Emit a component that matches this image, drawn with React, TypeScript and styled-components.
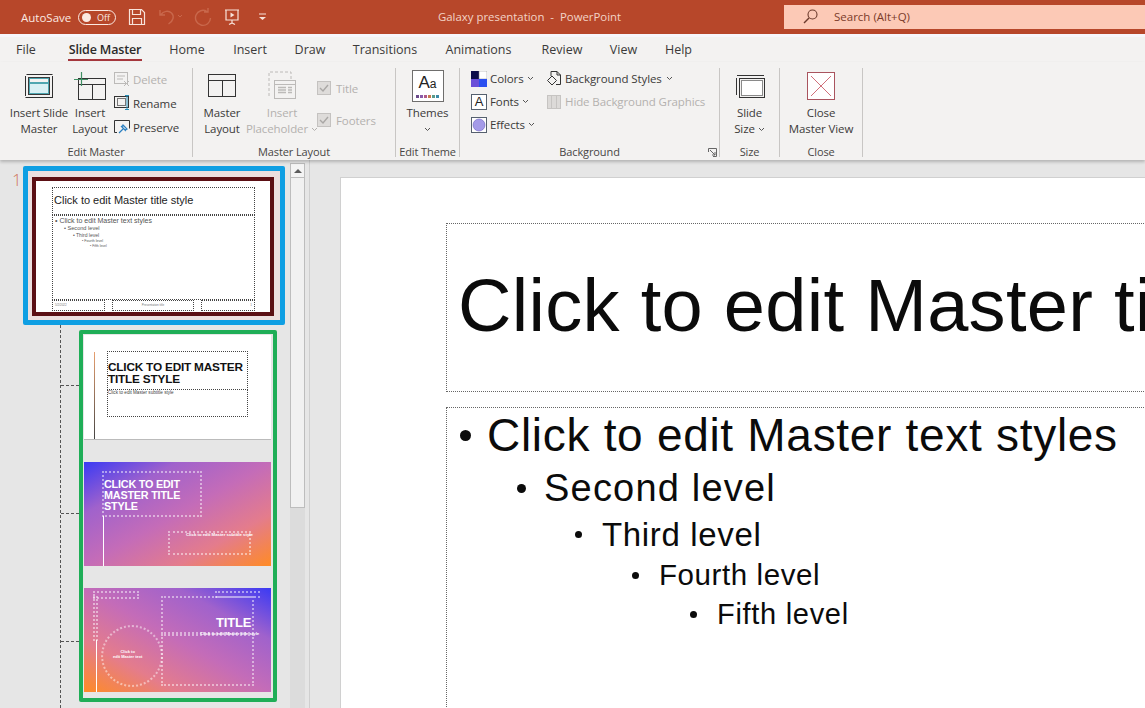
import React from 'react';
import styled, { createGlobalStyle } from 'styled-components';

const UI_FONT = '"Open Sans", "Noto Sans", sans-serif';
const SLIDE_FONT = '"Liberation Sans", Arial, sans-serif';

const GlobalStyle = createGlobalStyle`
  html, body {
    margin: 0;
    padding: 0;
    height: 100%;
    overflow: hidden;
    background: #e6e6e6;
  }
  #root {
    height: 100%;
  }
`;

const Window = styled.div`
  width: 1145px;
  height: 708px;
  display: flex;
  flex-direction: column;
  overflow: hidden;
  font-family: ${UI_FONT};
  color: #3b3a39;
`;

/* title bar */
const TitleBar = styled.header`
  flex: 0 0 34px;
  display: grid;
  grid-template-columns: 438px 346px 1fr;
  align-items: center;
  background: #b7472a;
  color: #f8e3da;
`;

const QuickAccess = styled.div`
  display: flex;
  align-items: center;
  padding-left: 21px;
  font-size: 11.5px;
`;

const AutoSave = styled.span`
  width: 57px;
  color: #fbe9e2;
`;

const Toggle = styled.span`
  width: 38px;
  height: 15px;
  box-sizing: border-box;
  border: 1px solid #fbe9e2;
  border-radius: 8px;
  display: flex;
  align-items: center;
  gap: 6px;
  padding-left: 3px;
  font-size: 9px;
  color: #fbe9e2;
  &::before {
    content: '';
    width: 9px;
    height: 9px;
    border-radius: 50%;
    background: #fbe9e2;
  }
`;

const QuickIcon = styled.span<{ $left: number }>`
  display: flex;
  margin-left: ${(p) => p.$left}px;
`;

const WindowTitle = styled.div`
  font-size: 11.4px;
  color: #f3d3c6;
  white-space: pre;
  padding-bottom: 1px;
`;

const SearchBox = styled.div`
  height: 24px;
  box-sizing: border-box;
  background: #fcc9b6;
  display: flex;
  align-items: center;
  gap: 16px;
  padding: 0 0 2px 19px;
  font-size: 11.5px;
  color: #7b3b2a;
`;

/* tabs */
const TabRow = styled.nav`
  flex: 0 0 28px;
  box-sizing: border-box;
  display: flex;
  background: #f3f2f1;
  border-top: 3px solid #f7f6fb;
  font-size: 12.5px;
`;

const Tab = styled.div<{ $width: number }>`
  width: ${(p) => p.$width}px;
  display: flex;
  justify-content: center;
  padding-top: 4px;
  box-sizing: border-box;
`;

const TabText = styled.span<{ $active?: boolean }>`
  height: 20px;
  line-height: 17px;
  box-sizing: border-box;
  padding: 0 1px;
  border-bottom: ${(p) => (p.$active ? '2px solid #a5373d' : 'none')};
  color: ${(p) => (p.$active ? '#2b2a29' : '#3b3a39')};
  font-weight: ${(p) => (p.$active ? 600 : 400)};
  letter-spacing: ${(p) => (p.$active ? '-0.15px' : '0')};
`;

/* ribbon */
const Ribbon = styled.section`
  flex: 0 0 98px;
  display: flex;
  background: #f3f2f1;
  font-size: 11.5px;
  letter-spacing: -0.1px;
  box-shadow: 0 2px 3px rgba(0, 0, 0, 0.22);
  position: relative;
  z-index: 2;
`;

const Group = styled.div<{ $width: number }>`
  width: ${(p) => p.$width}px;
  display: flex;
  flex-direction: column;
  position: relative;
`;

const GroupBody = styled.div<{ $pad?: number }>`
  height: 78px;
  padding: 4px 0 0 ${(p) => p.$pad ?? 0}px;
  display: flex;
  align-items: flex-start;
`;

const GroupLabel = styled.div`
  height: 16px;
  line-height: 16px;
  text-align: center;
  font-size: 11px;
  color: #484644;
`;

const Launcher = styled.span`
  position: absolute;
  right: 2px;
  bottom: 3px;
  display: flex;
`;

const Divider = styled.div`
  width: 1px;
  margin: 6px 0 3px;
  background: #c8c6c4;
`;

const BigButton = styled.div<{ $width: number; $disabled?: boolean }>`
  width: ${(p) => p.$width}px;
  flex: none;
  display: flex;
  flex-direction: column;
  align-items: center;
  color: ${(p) => (p.$disabled ? '#b3b1af' : 'inherit')};
`;

const BigIcon = styled.div`
  height: 39px;
  display: flex;
  align-items: center;
  justify-content: center;
`;

const BigLabel = styled.div`
  display: flex;
  align-items: center;
  justify-content: center;
  gap: 3px;
  line-height: 16px;
  min-height: 16px;
  white-space: nowrap;
`;

const SmallColumn = styled.div<{ $left?: number; $top?: number; $row: number; $width?: number }>`
  margin: ${(p) => p.$top ?? 0}px 0 0 ${(p) => p.$left ?? 0}px;
  width: ${(p) => (p.$width ? `${p.$width}px` : 'auto')};
  display: grid;
  grid-auto-rows: ${(p) => p.$row}px;
  flex: none;
`;

const SmallItem = styled.div<{ $gap?: number; $disabled?: boolean }>`
  display: flex;
  align-items: center;
  gap: ${(p) => p.$gap ?? 3}px;
  white-space: nowrap;
  color: ${(p) => (p.$disabled ? '#b3b1af' : 'inherit')};
`;

const ThemeTile = styled.div`
  width: 32px;
  height: 32px;
  box-sizing: border-box;
  border: 1px solid #6f6e6d;
  background: #fff;
  display: flex;
  flex-direction: column;
  align-items: center;
  font-family: ${SLIDE_FONT};
  color: #222;
`;

const ThemeLetters = styled.span`
  font-size: 17px;
  line-height: 22px;
  margin-top: 1px;
  letter-spacing: 0;
  & small {
    font-size: 12px;
  }
`;

const ThemeDots = styled.div`
  display: flex;
  gap: 1px;
`;

const ThemeDot = styled.i<{ $color: string }>`
  width: 3px;
  height: 3px;
  background: ${(p) => p.$color};
`;

const FontTile = styled.span`
  width: 16px;
  height: 16px;
  box-sizing: border-box;
  border: 1px solid #55606e;
  background: #fff;
  display: flex;
  align-items: center;
  justify-content: center;
  font-family: ${SLIDE_FONT};
  font-size: 13px;
  color: #222;
`;

/* workspace */
const Workspace = styled.main`
  flex: 1;
  min-height: 0;
  display: flex;
  background: #e6e6e6;
`;

const Sidebar = styled.aside`
  flex: 0 0 310px;
  box-sizing: border-box;
  display: flex;
  border-right: 1px solid #cfcfcf;
`;

const ThumbList = styled.div`
  width: 290px;
  padding-top: 6px;
  box-sizing: border-box;
`;

const MasterRow = styled.div`
  display: flex;
`;

const SlideNumber = styled.div`
  width: 23px;
  padding: 4px 0 0 12px;
  box-sizing: border-box;
  font-size: 17px;
  line-height: 20px;
  font-weight: 300;
  color: #cf7660;
`;

const MasterFrame = styled.div`
  width: 262px;
  height: 159px;
  box-sizing: border-box;
  border: 5px solid #0f9fe3;
  border-radius: 2px;
  background: #ecdfdf;
  padding: 6px 0 0 4px;
`;

const MasterSlide = styled.div`
  width: 242px;
  height: 139px;
  box-sizing: border-box;
  border: 4px solid #5b0f14;
  background: #fff;
  position: relative;
  font-family: ${SLIDE_FONT};
`;

const Marquee = styled.div<{ $x: number; $y: number; $w: number; $h: number; $light?: boolean; $round?: boolean }>`
  position: absolute;
  left: ${(p) => p.$x}px;
  top: ${(p) => p.$y}px;
  width: ${(p) => p.$w}px;
  height: ${(p) => p.$h}px;
  box-sizing: border-box;
  border: ${(p) => (p.$light ? '2px dotted rgba(255, 255, 255, 0.48)' : '1px dotted #444')};
  border-radius: ${(p) => (p.$round ? '50%' : '0')};
`;

const ThumbTitle = styled.div`
  position: absolute;
  left: 1px;
  top: 6px;
  font-size: 11px;
  line-height: 13px;
  color: #222;
  white-space: nowrap;
`;

const ThumbLevel = styled.div<{ $indent: number; $size: number }>`
  padding-left: ${(p) => p.$indent}px;
  font-size: ${(p) => p.$size}px;
  line-height: ${(p) => p.$size + 1.4}px;
  color: #555;
  white-space: nowrap;
`;

const ThumbBody = styled.div`
  position: absolute;
  left: 2px;
  top: 1px;
`;

const FooterText = styled.div<{ $align: string }>`
  font-size: 3px;
  line-height: 9px;
  padding: 0 2px;
  text-align: ${(p) => p.$align};
  color: #777;
`;

const LayoutRow = styled.div`
  display: flex;
  margin-left: 60px;
`;

const TreeRail = styled.div`
  width: 19px;
  height: 383px;
  flex: none;
  box-sizing: border-box;
  border-left: 1px dashed #555;
  display: flex;
  flex-direction: column;
  padding-top: 60px;
  gap: 127px;
`;

const TreeBranch = styled.div`
  height: 0;
  border-top: 1px dashed #555;
`;

const LayoutFrame = styled.div`
  width: 198px;
  height: 372px;
  margin-top: 5px;
  box-sizing: border-box;
  border: 4px solid #1fae57;
  border-radius: 2px;
  padding: 1px 0 0 1px;
  display: flex;
  flex-direction: column;
  gap: 22px;
`;

const LayoutSlide = styled.div<{ $variant: 'plain' | 'diagonal' | 'reverse' }>`
  width: 187px;
  height: 104px;
  flex: none;
  position: relative;
  overflow: hidden;
  font-family: ${SLIDE_FONT};
  background: ${(p) =>
    p.$variant === 'plain'
      ? '#fff'
      : p.$variant === 'diagonal'
        ? 'linear-gradient(to bottom right, #3a3af4 0%, #a062cc 25%, #c46cb8 50%, #e47c8c 75%, #ff8b25 100%)'
        : 'linear-gradient(to top right, #ff8b25 0%, #e47c8c 25%, #c46cb8 50%, #a062cc 75%, #3a3af4 100%)'};
  border-bottom: ${(p) => (p.$variant === 'plain' ? '1px solid #bbb' : 'none')};
`;

const SlideRule = styled.div<{ $x: number; $y: number; $h: number; $fade?: boolean }>`
  position: absolute;
  left: ${(p) => p.$x}px;
  top: ${(p) => p.$y}px;
  width: 1px;
  height: ${(p) => p.$h}px;
  background: ${(p) => (p.$fade ? 'linear-gradient(#e8a070, #444)' : '#fff')};
`;

const CapsTitle = styled.div<{ $x: number; $y: number; $size: number; $line: number; $light?: boolean }>`
  position: absolute;
  left: ${(p) => p.$x}px;
  top: ${(p) => p.$y}px;
  font-size: ${(p) => p.$size}px;
  line-height: ${(p) => p.$line}px;
  font-weight: 700;
  letter-spacing: -0.2px;
  color: ${(p) => (p.$light ? '#fff' : '#111')};
  white-space: nowrap;
`;

const TinyText = styled.div<{ $x: number; $y: number; $light?: boolean; $size?: number }>`
  position: absolute;
  left: ${(p) => p.$x}px;
  top: ${(p) => p.$y}px;
  font-size: ${(p) => p.$size ?? 4.6}px;
  line-height: ${(p) => (p.$size ? p.$size + 0.6 : 6)}px;
  font-weight: ${(p) => (p.$light ? 700 : 400)};
  color: ${(p) => (p.$light ? '#fff' : '#444')};
  white-space: nowrap;
  text-align: center;
`;

const ScrollColumn = styled.div`
  width: 15px;
  padding-top: 3px;
  display: flex;
  flex-direction: column;
  background: transparent;
`;

const ScrollUp = styled.div`
  height: 15px;
  flex: none;
  box-sizing: border-box;
  border: 1px solid #bdbdbd;
  background: #f4f4f4;
  display: flex;
  align-items: center;
  justify-content: center;
  &::before {
    content: '';
    border-left: 4px solid transparent;
    border-right: 4px solid transparent;
    border-bottom: 4px solid #5c5c5c;
  }
`;

const ScrollThumb = styled.div`
  height: 330px;
  flex: none;
  box-sizing: border-box;
  border: 1px solid #bdbdbd;
  border-top: none;
  background: #f1f1f1;
`;

const ScrollTrack = styled.div`
  flex: 1;
  background: #dcdcdc;
`;

const Stage = styled.div`
  flex: 1;
  min-width: 0;
  overflow: hidden;
  padding: 17px 0 0 30px;
`;

const SlideSheet = styled.div`
  width: 1100px;
  height: 700px;
  box-sizing: border-box;
  background: #fff;
  border: 1px solid #d0d0d0;
  padding: 45px 0 0 105px;
  font-family: ${SLIDE_FONT};
  color: #0b0b0b;
`;

const TitleHolder = styled.div`
  width: 900px;
  height: 169px;
  box-sizing: border-box;
  border: 1px dotted #666;
  padding: 0 0 5px 11px;
  display: flex;
  align-items: center;
  font-size: 74px;
  letter-spacing: 0.3px;
  white-space: nowrap;
  overflow: hidden;
`;

const BodyHolder = styled.div`
  width: 900px;
  height: 500px;
  margin-top: 15px;
  box-sizing: border-box;
  border: 1px dotted #666;
  padding: 0 0 0 13px;
`;

const Level = styled.div<{ $indent: number; $size: number; $height: number; $bullet: number; $spacing: number }>`
  height: ${(p) => p.$height}px;
  line-height: ${(p) => p.$height}px;
  margin-left: ${(p) => p.$indent}px;
  font-size: ${(p) => p.$size}px;
  letter-spacing: ${(p) => p.$spacing}px;
  white-space: nowrap;
  display: flex;
  align-items: center;
  &::before {
    content: '';
    width: ${(p) => p.$bullet}px;
    height: ${(p) => p.$bullet}px;
    margin-right: ${(p) => 27 - p.$bullet}px;
    border-radius: 50%;
    background: #0b0b0b;
    flex: none;
  }
`;

const Chevron = ({ color = '#555' }: { color?: string }) => (
  <svg width="7" height="5" viewBox="0 0 7 5">
    <polyline points="1,1 3.5,3.5 6,1" fill="none" stroke={color} strokeWidth="1" />
  </svg>
);

const TitleIcon = ({ children, w = 18 }: { children: React.ReactNode; w?: number }) => (
  <svg width={w} height="20" viewBox={`0 0 ${w} 20`} fill="none" stroke="#f8e3da" strokeWidth="1.2">
    {children}
  </svg>
);

const Check = () => (
  <svg width="14" height="14" viewBox="0 0 14 14">
    <rect x="0.5" y="0.5" width="13" height="13" fill="#dedcda" stroke="#c4c2c0" />
    <polyline points="3,7 6,10 11,4" fill="none" stroke="#a9a7a5" strokeWidth="1.4" />
  </svg>
);

const App: React.FC = () => {
  const tabs: [string, number][] = [
    ['File', 52],
    ['Slide Master', 106],
    ['Home', 58],
    ['Insert', 68],
    ['Draw', 52],
    ['Transitions', 98],
    ['Animations', 89],
    ['Review', 78],
    ['View', 45],
    ['Help', 65],
  ];

  return (
    <Window>
      <GlobalStyle />
      <TitleBar>
        <QuickAccess>
          <AutoSave>AutoSave</AutoSave>
          <Toggle>Off</Toggle>
          <QuickIcon $left={12}>
            <TitleIcon>
              <path d="M1.5 2.5h12l3 3v12h-15z" />
              <path d="M4.5 2.5v5h8v-5M4.5 17.5v-6h9v6" />
            </TitleIcon>
          </QuickIcon>
          <QuickIcon $left={11}>
            <svg width="26" height="20" viewBox="0 0 26 20" fill="none" stroke="#c9684c" strokeWidth="1.4">
              <path d="M3 3v5h5M3.500 8c3-4 8-5 11-2 3 3 2 8-3 11" />
              <path d="M21 8l2 2 2-2" strokeWidth="1" />
            </svg>
          </QuickIcon>
          <QuickIcon $left={11}>
            <svg width="18" height="20" viewBox="0 0 18 20" fill="none" stroke="#c9684c" strokeWidth="1.4">
              <path d="M13 4.500A7.500 7.500 0 1 0 16.500 11M14 1v4h-4" />
            </svg>
          </QuickIcon>
          <QuickIcon $left={11}>
            <TitleIcon>
              <path d="M2 3h14M3 3v10h12V3M9 13v3M6 17.500l3-1.500 3 1.500" />
              <path d="M7.500 5.500l4 2.500-4 2.500z" fill="#f8e3da" stroke="none" />
            </TitleIcon>
          </QuickIcon>
          <QuickIcon $left={17}>
            <svg width="9" height="10" viewBox="0 0 9 10" fill="none" stroke="#f8e3da">
              <path d="M1 2h7" />
              <path d="M1 5l3.500 3L8 5z" fill="#f8e3da" stroke="none" />
            </svg>
          </QuickIcon>
        </QuickAccess>
        <WindowTitle>Galaxy presentation  -  PowerPoint</WindowTitle>
        <SearchBox>
          <svg width="15" height="15" viewBox="0 0 15 15" fill="none" stroke="#6b3a2c" strokeWidth="1.1">
            <circle cx="9.500" cy="5.500" r="4.500" />
            <path d="M6 9l-5 5" strokeWidth="1.500" />
          </svg>
          <span>Search (Alt+Q)</span>
        </SearchBox>
      </TitleBar>

      <TabRow>
        {tabs.map(([name, width]) => (
          <Tab key={name} $width={width}>
            <TabText $active={name === 'Slide Master'}>{name}</TabText>
          </Tab>
        ))}
      </TabRow>

      <Ribbon>
        <Group $width={192}>
          <GroupBody $pad={9}>
            <BigButton $width={60}>
              <BigIcon>
                <svg width="30" height="26" viewBox="0 0 30 26" fill="none" stroke="#2f2f2f">
                  <path d="M2.500 1.500h26M1.500 3v20M1.500 24.500h27.500M28.500 3v21" />
                  <rect x="4.500" y="4.500" width="21" height="17" stroke="#3a3a3a" />
                  <rect x="5.500" y="5.500" width="19" height="4" stroke="#4fa6b0" />
                  <rect x="5.500" y="10.500" width="19" height="10" fill="#d9f0f4" stroke="#4fa6b0" />
                </svg>
              </BigIcon>
              <BigLabel>Insert Slide</BigLabel>
              <BigLabel>Master</BigLabel>
            </BigButton>
            <BigButton $width={42}>
              <BigIcon>
                <svg width="32" height="30" viewBox="0 0 32 30" fill="none" stroke="#333">
                  <rect x="4.500" y="7.500" width="27" height="21" />
                  <path d="M5 13.500h26M18.500 14v14" />
                  <path d="M0 8.500h14M7.500 1v14" stroke="#3f8f63" strokeWidth="1.200" />
                </svg>
              </BigIcon>
              <BigLabel>Insert</BigLabel>
              <BigLabel>Layout</BigLabel>
            </BigButton>
            <SmallColumn $left={3} $top={1} $row={24}>
              <SmallItem $disabled>
                <svg width="16" height="16" viewBox="0 0 16 16" fill="none" stroke="#bcbab8">
                  <rect x="0.500" y="1.500" width="13" height="11" />
                  <path d="M3 5h8M3 8h6M10 10l5 5M15 10l-5 5" />
                </svg>
                Delete
              </SmallItem>
              <SmallItem>
                <svg width="16" height="18" viewBox="0 0 16 18" fill="none" stroke="#333">
                  <rect x="0.500" y="2.500" width="14" height="11" />
                  <rect x="3.500" y="4.500" width="8" height="7" stroke="#777" />
                  <path d="M11 1.500h4M13 1.500v14M11 15.500h4" stroke="#2a8fb8" />
                </svg>
                Rename
              </SmallItem>
              <SmallItem>
                <svg width="16" height="16" viewBox="0 0 16 16" fill="none" stroke="#333">
                  <path d="M3 13.500H0.500V1.500h15v8" />
                  <path d="M5 14l4-4M7 7l5 5M9 6l4 4-2 1-3-3z" stroke="#2a7fc0" strokeWidth="1.200" />
                </svg>
                Preserve
              </SmallItem>
            </SmallColumn>
          </GroupBody>
          <GroupLabel>Edit Master</GroupLabel>
        </Group>
        <Divider />

        <Group $width={202}>
          <GroupBody $pad={7}>
            <BigButton $width={44}>
              <BigIcon>
                <svg width="28" height="23" viewBox="0 0 28 23" fill="none" stroke="#333">
                  <rect x="0.500" y="0.500" width="27" height="22" />
                  <path d="M1 6.500h26M14.500 7v15" />
                </svg>
              </BigIcon>
              <BigLabel>Master</BigLabel>
              <BigLabel>Layout</BigLabel>
            </BigButton>
            <BigButton $width={76} $disabled>
              <BigIcon>
                <svg width="28" height="30" viewBox="0 0 28 30" fill="none" stroke="#bcbab8">
                  <path d="M1 25V1h22v8" strokeDasharray="3 2" />
                  <rect x="6.500" y="9.500" width="21" height="18" fill="#f3f2f1" />
                  <path d="M7 13.500h20" />
                  <path d="M10 16.500h8M10 19h8M10 21.500h8M20 16.500h4M20 19h4M20 21.500h4" strokeWidth="1.600" />
                </svg>
              </BigIcon>
              <BigLabel>Insert</BigLabel>
              <BigLabel>
                Placeholder
                <Chevron color="#b3b1af" />
              </BigLabel>
            </BigButton>
            <SmallColumn $left={-3} $top={6} $row={32}>
              <SmallItem $disabled $gap={5}>
                <Check />
                Title
              </SmallItem>
              <SmallItem $disabled $gap={5}>
                <Check />
                Footers
              </SmallItem>
            </SmallColumn>
          </GroupBody>
          <GroupLabel>Master Layout</GroupLabel>
        </Group>
        <Divider />

        <Group $width={63}>
          <GroupBody>
            <BigButton $width={63}>
              <BigIcon>
                <ThemeTile>
                  <ThemeLetters>
                    A<small>a</small>
                  </ThemeLetters>
                  <ThemeDots>
                    {['#6b4a8a', '#8a5aa8', '#b05a8a', '#c87a4a', '#5a9a8a', '#3a8aa8'].map((c) => (
                      <ThemeDot key={c} $color={c} />
                    ))}
                  </ThemeDots>
                </ThemeTile>
              </BigIcon>
              <BigLabel>Themes</BigLabel>
              <BigLabel>
                <Chevron />
              </BigLabel>
            </BigButton>
          </GroupBody>
          <GroupLabel>Edit Theme</GroupLabel>
        </Group>
        <Divider />

        <Group $width={259}>
          <GroupBody $pad={11}>
            <SmallColumn $top={1} $row={23} $width={76}>
              <SmallItem>
                <svg width="16" height="16" viewBox="0 0 16 16">
                  <rect width="8" height="8" fill="#0c0c4a" />
                  <rect x="8" width="8" height="8" fill="#fff" stroke="#888" strokeWidth="0.500" />
                  <rect y="8" width="8" height="8" fill="#6a4fd8" />
                  <rect x="8" y="8" width="8" height="8" fill="#2a4ff0" />
                </svg>
                Colors
                <Chevron />
              </SmallItem>
              <SmallItem>
                <FontTile>A</FontTile>
                Fonts
                <Chevron />
              </SmallItem>
              <SmallItem>
                <svg width="16" height="16" viewBox="0 0 16 16">
                  <rect x="0.500" y="0.500" width="15" height="15" fill="#fff" stroke="#55606e" />
                  <circle cx="8" cy="8" r="6" fill="#a49ae8" stroke="#6a60c0" strokeWidth="0.600" />
                </svg>
                Effects
                <Chevron />
              </SmallItem>
            </SmallColumn>
            <SmallColumn $top={1} $row={23}>
              <SmallItem $gap={4}>
                <svg width="14" height="16" viewBox="0 0 14 16" fill="none" stroke="#333">
                  <path d="M4 5V0.500h6l3.500 3.500v9.500H9" />
                  <path d="M10 0.500V4h3.500" />
                  <path d="M5 5l4.500 4.500L5 14 0.500 9.500z" />
                </svg>
                Background Styles
                <Chevron />
              </SmallItem>
              <SmallItem $disabled $gap={4}>
                <svg width="14" height="14" viewBox="0 0 14 14" fill="#dcdad8" stroke="#c6c4c2">
                  <rect x="0.500" y="0.500" width="13" height="13" />
                  <path d="M4.500 1v12M9.500 1v12" />
                </svg>
                Hide Background Graphics
              </SmallItem>
            </SmallColumn>
          </GroupBody>
          <GroupLabel>Background</GroupLabel>
          <Launcher>
            <svg width="9" height="9" viewBox="0 0 9 9" fill="none" stroke="#666">
              <path d="M0.500 4V0.500H8.500V8.500H5" />
              <path d="M2 2l5 5M4 7h3V4" />
            </svg>
          </Launcher>
        </Group>
        <Divider />

        <Group $width={59}>
          <GroupBody>
            <BigButton $width={59}>
              <BigIcon>
                <svg width="30" height="24" viewBox="0 0 30 24" fill="none" stroke="#333">
                  <path d="M2 1.500h27M1.500 4v17" />
                  <rect x="4.500" y="4.500" width="25" height="19" />
                  <rect x="6.500" y="6.500" width="21" height="15" fill="#fff" stroke="#8a8a8a" />
                </svg>
              </BigIcon>
              <BigLabel>Slide</BigLabel>
              <BigLabel>
                Size
                <Chevron />
              </BigLabel>
            </BigButton>
          </GroupBody>
          <GroupLabel>Size</GroupLabel>
        </Group>
        <Divider />

        <Group $width={82}>
          <GroupBody>
            <BigButton $width={82}>
              <BigIcon>
                <svg width="28" height="28" viewBox="0 0 28 28" fill="#fff" stroke="#a9545e">
                  <rect x="0.500" y="0.500" width="27" height="27" />
                  <path d="M4 4l20 20M24 4L4 24" stroke="#d0707a" />
                </svg>
              </BigIcon>
              <BigLabel>Close</BigLabel>
              <BigLabel>Master View</BigLabel>
            </BigButton>
          </GroupBody>
          <GroupLabel>Close</GroupLabel>
        </Group>
        <Divider />
      </Ribbon>

      <Workspace>
        <Sidebar>
          <ThumbList>
            <MasterRow>
              <SlideNumber>1</SlideNumber>
              <MasterFrame>
                <MasterSlide>
                  <Marquee $x={16} $y={6} $w={203} $h={28}>
                    <ThumbTitle>Click to edit Master title style</ThumbTitle>
                  </Marquee>
                  <Marquee $x={16} $y={34} $w={203} $h={85}>
                    <ThumbBody>
                      <ThumbLevel $indent={0} $size={7}>• Click to edit Master text styles</ThumbLevel>
                      <ThumbLevel $indent={9} $size={5.600}>• Second level</ThumbLevel>
                      <ThumbLevel $indent={18} $size={5}>• Third level</ThumbLevel>
                      <ThumbLevel $indent={27} $size={3.600}>• Fourth level</ThumbLevel>
                      <ThumbLevel $indent={35} $size={3.400}>• Fifth level</ThumbLevel>
                    </ThumbBody>
                  </Marquee>
                  <Marquee $x={16} $y={119} $w={53} $h={11}>
                    <FooterText $align="left">5/2/2022</FooterText>
                  </Marquee>
                  <Marquee $x={76} $y={119} $w={82} $h={11}>
                    <FooterText $align="center">Presentation title</FooterText>
                  </Marquee>
                  <Marquee $x={165} $y={119} $w={54} $h={11}>
                    <FooterText $align="right">1</FooterText>
                  </Marquee>
                </MasterSlide>
              </MasterFrame>
            </MasterRow>

            <LayoutRow>
              <TreeRail>
                <TreeBranch />
                <TreeBranch />
                <TreeBranch />
              </TreeRail>
              <LayoutFrame>
                <LayoutSlide $variant="plain">
                  <SlideRule $x={10} $y={17} $h={87} $fade />
                  <Marquee $x={23} $y={16} $w={141} $h={39} />
                  <Marquee $x={23} $y={54} $w={141} $h={28} />
                  <CapsTitle $x={24} $y={26} $size={11.800} $line={12}>
                    CLICK TO EDIT MASTER
                    <br />
                    TITLE STYLE
                  </CapsTitle>
                  <TinyText $x={24} $y={55}>Click to edit Master subtitle style</TinyText>
                </LayoutSlide>
                <LayoutSlide $variant="diagonal">
                  <Marquee $light $x={18} $y={9} $w={100} $h={46} />
                  <CapsTitle $light $x={20} $y={17} $size={10.800} $line={11}>
                    CLICK TO EDIT
                    <br />
                    MASTER TITLE
                    <br />
                    STYLE
                  </CapsTitle>
                  <SlideRule $x={19} $y={54} $h={50} />
                  <Marquee $light $x={84} $y={69} $w={83} $h={24} />
                  <TinyText $light $x={102} $y={71} $size={4.300}>Click to edit Master subtitle style</TinyText>
                </LayoutSlide>
                <LayoutSlide $variant="reverse">
                  <Marquee $light $x={9} $y={3} $w={46} $h={8} />
                  <Marquee $light $x={9} $y={8} $w={5} $h={45} />
                  <Marquee $light $x={131} $y={3} $w={45} $h={7} />
                  <Marquee $light $x={77} $y={8} $w={93} $h={38} />
                  <Marquee $light $x={77} $y={46} $w={93} $h={52} />
                  <Marquee $light $round $x={17} $y={37} $w={62} $h={62} />
                  <SlideRule $x={12} $y={52} $h={52} />
                  <CapsTitle $light $x={132} $y={28} $size={13} $line={14}>TITLE</CapsTitle>
                  <TinyText $light $x={116} $y={44} $size={4.300}>Click to edit Master title style</TinyText>
                  <TinyText $light $x={29} $y={62} $size={4}>
                    Click to
                    <br />
                    edit Master text
                  </TinyText>
                </LayoutSlide>
              </LayoutFrame>
            </LayoutRow>
          </ThumbList>
          <ScrollColumn>
            <ScrollUp />
            <ScrollThumb />
            <ScrollTrack />
          </ScrollColumn>
        </Sidebar>

        <Stage>
          <SlideSheet>
            <TitleHolder>Click to edit Master title style</TitleHolder>
            <BodyHolder>
              <Level $indent={0} $size={46} $height={54} $bullet={11} $spacing={0.7}>Click to edit Master text styles</Level>
              <Level $indent={57} $size={38} $height={52} $bullet={9} $spacing={1.2}>Second level</Level>
              <Level $indent={115} $size={33} $height={41} $bullet={7} $spacing={0.66}>Third level</Level>
              <Level $indent={172} $size={29.500} $height={40} $bullet={7} $spacing={0.59}>Fourth level</Level>
              <Level $indent={230} $size={29} $height={38} $bullet={7} $spacing={0.7}>Fifth level</Level>
            </BodyHolder>
          </SlideSheet>
        </Stage>
      </Workspace>
    </Window>
  );
};

export default App;
